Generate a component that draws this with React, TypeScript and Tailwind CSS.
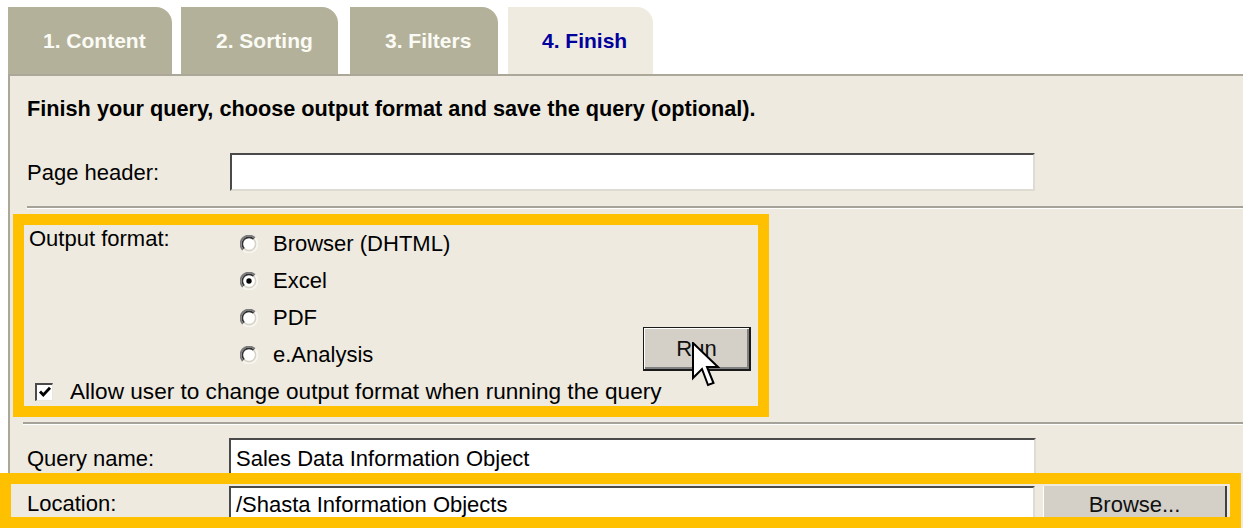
import React from "react";

function Radio({ checked }: { checked?: boolean }) {
  return (
    <svg width="18" height="18" viewBox="0 0 18 18" className="shrink-0">
      <circle cx="9" cy="9" r="8" fill="#fff" />
      <path d="M3 15 A8.4 8.4 0 0 1 15 3" fill="none" stroke="#7a7a7a" strokeWidth="1.8" />
      <path d="M4.3 13.7 A6.6 6.6 0 0 1 13.7 4.3" fill="none" stroke="#303030" strokeWidth="1.6" />
      <path d="M15 3 A8.4 8.4 0 0 1 3 15" fill="none" stroke="#f7f5ef" strokeWidth="1.8" />
      <path d="M13.7 4.3 A6.6 6.6 0 0 1 4.3 13.7" fill="none" stroke="#d6d2c6" strokeWidth="1.6" />
      {checked && <circle cx="9" cy="9" r="2.7" fill="#000" />}
    </svg>
  );
}

function Checkbox() {
  return (
    <div className="w-[18px] h-[18px] shrink-0 bg-white border-t-2 border-l-2 border-t-[#4a4a4a] border-l-[#4a4a4a] border-b border-r border-b-[#e8e6de] border-r-[#e8e6de] flex items-center justify-center">
      <svg width="14" height="14" viewBox="0 0 14 14">
        <path d="M2 6.5 L5.3 10 L12 2.8" fill="none" stroke="#000" strokeWidth="2.8" />
      </svg>
    </div>
  );
}

const inputCls =
  "bg-white border-t-2 border-l-2 border-t-[#4a4a4a] border-l-[#4a4a4a] border-b-2 border-r-2 border-b-[#dedbd2] border-r-[#dedbd2] pl-[5px] flex items-center text-[22px] text-black";

export default function App() {
  const font = { fontFamily: '"Liberation Sans", Arial, sans-serif' };
  return (
    <div className="relative w-[1243px] h-[528px] overflow-hidden bg-white" style={font}>
      {/* Tabs */}
      <div className="flex pt-[7px] pl-[8px] h-[74px]">
        <div className="w-[164px] h-[67px] bg-[#b4b19b] rounded-tr-[16px] flex items-center pl-[35px] text-[21px] font-bold text-[#fbfbf5]">
          1. Content
        </div>
        <div className="ml-[9px] w-[157px] h-[67px] bg-[#b4b19b] rounded-tr-[16px] flex items-center pl-[35px] text-[21px] font-bold text-[#fbfbf5]">
          2. Sorting
        </div>
        <div className="ml-[12px] w-[148px] h-[67px] bg-[#b4b19b] rounded-tr-[16px] flex items-center pl-[35px] text-[21px] font-bold text-[#fbfbf5]">
          3. Filters
        </div>
        <div className="ml-[10px] w-[145px] h-[67px] bg-[#efebe0] rounded-tr-[16px] flex items-center pl-[34px] text-[21px] font-bold text-[#00009c]">
          4. Finish
        </div>
      </div>

      {/* Panel */}
      <div className="ml-[8px] h-[454px] bg-[#eeeadf] border-t-2 border-l-2 border-[#aca899] text-black">
        <div className="pt-[21px] pl-[17px] text-[21.7px] font-bold leading-[24px]">
          Finish your query, choose output format and save the query (optional).
        </div>

        <div className="mt-[32px] pl-[17px] flex items-center h-[38px]">
          <div className="w-[203px] text-[22px]">Page header:</div>
          <div className={inputCls + " w-[805px] h-[38px]"}></div>
        </div>

        <div className="mt-[15px] ml-[17px] border-t-2 border-[#a5a399] border-b border-b-white"></div>

        <div className="mt-[16px] pl-[19px] flex">
          <div className="w-[211px] text-[22px] leading-[24px] mt-[2px]">Output format:</div>
          <div className="w-[403px] flex flex-col">
            {[
              ["Browser (DHTML)", false],
              ["Excel", true],
              ["PDF", false],
              ["e.Analysis", false],
            ].map(([label, checked]) => (
              <div key={label as string} className="h-[37px] flex items-center gap-[15px] text-[22px]">
                <Radio checked={checked as boolean} />
                <span>{label as string}</span>
              </div>
            ))}
          </div>
          <div className="self-end mb-[2px] w-[108px] h-[44px] bg-[#d4d0c8] border border-[#1a1a1a] border-r-2 border-b-2 shadow-[inset_1px_1px_0_#ffffff,inset_-2px_-2px_0_#808080] flex items-center justify-center text-[22px] text-[#111]">
            Run
          </div>
        </div>

        <div className="h-[37px] pl-[25px] flex items-center gap-[17px] text-[22.6px]">
          <Checkbox />
          <span>Allow user to change output format when running the query</span>
        </div>

        <div className="mt-[12px] ml-[13px] border-t-2 border-[#a5a399] border-b border-b-white"></div>

        <div className="mt-[13px] pl-[17px] flex items-center h-[40px]">
          <div className="w-[202px] text-[22px]">Query name:</div>
          <div className={inputCls + " w-[807px] h-[40px]"}>Sales Data Information Object</div>
        </div>

        <div className="mt-[8px] pl-[17px] flex items-start h-[40px]">
          <div className="w-[202px] h-[34px] flex items-center text-[22px]">Location:</div>
          <div className={inputCls + " w-[806px] h-[40px] pl-[2px] items-start"}>/Shasta Information Objects</div>
          <div className="ml-[8px] w-[184px] h-[36px] bg-[#d4d0c8] border-l border-l-white border-r-2 border-r-[#404040] flex items-center justify-center text-[22px] text-[#111]">
            Browse...
          </div>
        </div>
      </div>

      {/* Annotation overlays */}
      <div className="absolute left-[13px] top-[214px] w-[756px] h-[203px] border-[11px] border-[#ffc000] pointer-events-none"></div>
      <div className="absolute left-0 top-[473px] w-[1241px] h-[55px] border-[11px] border-[#ffc000] pointer-events-none"></div>

      {/* Cursor */}
      <svg className="absolute left-[692px] top-[342px]" width="28" height="46" viewBox="-1 -1 28 46">
        <path
          d="M0 0 L0 35 L9 26 L15 42 L20.5 40 L14 24 L25 24 Z"
          fill="#fff"
          stroke="#000"
          strokeWidth="2"
          strokeLinejoin="miter"
        />
      </svg>
    </div>
  );
}
